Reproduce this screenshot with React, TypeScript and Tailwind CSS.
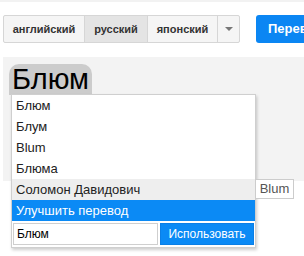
import React from "react";

const font = { fontFamily: '"Liberation Sans", Arial, sans-serif' } as const;

const tabCls =
  "flex h-full items-center justify-center border-r border-[#d6d6d6] text-[11px] font-bold text-[#333]";

const options = ["Блюм", "Блум", "Blum", "Блюма"];

export default function App() {
  return (
    <div className="relative h-[256px] w-[304px] overflow-hidden bg-white" style={font}>
      <div className="h-[2px] bg-[#f2f2f2]" />

      {/* языки */}
      <div className="mt-[13px] flex h-[28px] items-stretch pl-[3px]">
        <div className="flex h-full rounded-[2px] border border-[#d6d6d6] bg-[#f5f5f5]">
          <div className={`${tabCls} w-[81px]`}>английский</div>
          <div className={`${tabCls} w-[63px] bg-[#e4e4e4]`}>русский</div>
          <div className={`${tabCls} w-[70px]`}>японский</div>
          <div className="flex w-[21px] items-center justify-center">
            <span className="block h-0 w-0 border-x-[4px] border-t-[4px] border-x-transparent border-t-[#777]" />
          </div>
        </div>
        <div className="ml-[16px] flex h-full w-[80px] items-center rounded-[3px] bg-[#0b86f3] pl-[12px] text-[13px] font-bold text-white">
          Перевести
        </div>
      </div>

      {/* результат */}
      <div className="ml-[3px] mt-[14px] h-[124px] bg-[#f3f3f3] pl-[6px] pt-[7px]">
        <div className="inline-flex h-[31px] items-end rounded-t-[10px] bg-[#cccccc] px-[3px] pb-[1px] text-[29px] leading-none text-black">
          Блюм
        </div>
      </div>

      {/* меню вариантов */}
      <div className="absolute left-[11px] top-[94px] flex w-[245px] flex-col border border-[#cfcfcf] bg-white shadow-[1px_2px_3px_rgba(0,0,0,0.2)]">
        {options.map((o) => (
          <div key={o} className="flex h-[21px] items-center px-[4px] text-[13px] text-[#222]">
            {o}
          </div>
        ))}
        <div className="flex h-[21px] items-center bg-[#eeeeee] px-[4px] text-[13px] text-[#222]">
          Соломон Давидович
        </div>
        <div className="flex h-[21px] items-center bg-[#0b8af5] px-[4px] text-[13px] text-white">
          Улучшить перевод
        </div>
        <div className="flex h-[26px] items-center gap-[2px] px-[1px] pb-[1px]">
          <div className="flex h-[22px] w-[145px] items-center border border-[#cfcfcf] px-[3px] text-[12px] text-black">
            Блюм
          </div>
          <div className="flex h-[22px] flex-1 items-center justify-center border border-[#0b7fe6] bg-[#0b8af5] text-[12px] text-white">
            Использовать
          </div>
        </div>
      </div>

      {/* подсказка */}
      <div className="absolute left-[255px] top-[179px] flex h-[20px] w-[39px] items-center justify-center border border-[#cccccc] bg-white text-[13px] text-[#555]">
        Blum
      </div>
    </div>
  );
}
